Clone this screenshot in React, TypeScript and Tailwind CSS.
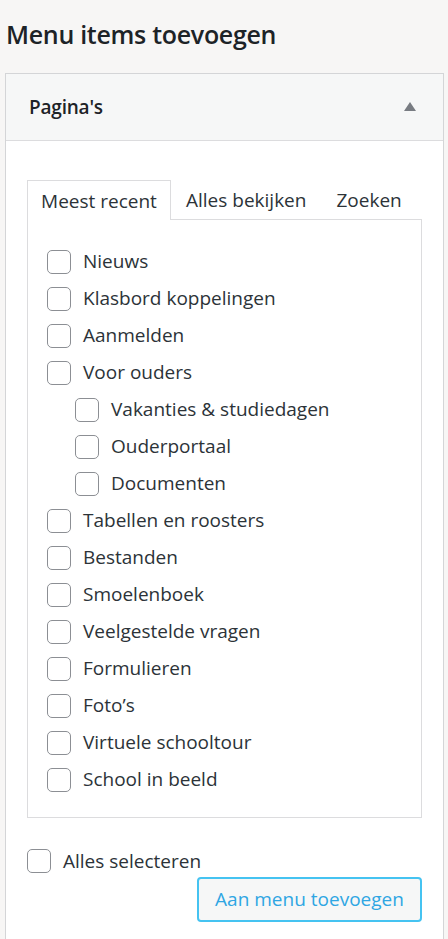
import React from "react";

type Item = { label: string; level?: number };

const items: Item[] = [
  { label: "Nieuws" },
  { label: "Klasbord koppelingen" },
  { label: "Aanmelden" },
  { label: "Voor ouders" },
  { label: "Vakanties & studiedagen", level: 1 },
  { label: "Ouderportaal", level: 1 },
  { label: "Documenten", level: 1 },
  { label: "Tabellen en roosters" },
  { label: "Bestanden" },
  { label: "Smoelenboek" },
  { label: "Veelgestelde vragen" },
  { label: "Formulieren" },
  { label: "Foto’s" },
  { label: "Virtuele schooltour" },
  { label: "School in beeld" },
];

const Box = () => (
  <span className="block w-6 h-6 shrink-0 rounded-[5px] border-[1.5px] border-[#8c8f94] bg-white" />
);

export default function App() {
  return (
    <div
      className="min-h-[939px] bg-[#f7f6f5] text-[#1d2327] overflow-hidden"
      style={{ fontFamily: '"Open Sans", "Noto Sans", sans-serif' }}
    >
      <h2 className="pl-[6px] pt-[17px] text-[25px] leading-[34px] font-semibold tracking-[-0.3px]">
        Menu items toevoegen
      </h2>

      <div className="mt-[22px] ml-[5px] mr-[4px] border border-[#d4d5d7] bg-white min-h-[900px]">
        {/* header */}
        <div className="h-[67px] flex items-center justify-between pl-[23px] pr-[27px] bg-[#f6f7f7] border-b border-[#dcdcde]">
          <span className="text-[19px] font-semibold tracking-[-0.2px]">Pagina's</span>
          <svg width="12" height="9" viewBox="0 0 12 9" className="mb-[2px]">
            <path d="M6 0 L12 9 L0 9 Z" fill="#787c82" />
          </svg>
        </div>

        <div className="pt-[38px] pl-[21px] pr-[21px]">
          {/* tabs */}
          <div className="flex items-end text-[19px] leading-[26px] text-[#2c3338]">
            <div className="h-[40px] w-[144px] flex items-center justify-center border border-b-0 border-[#dcdcde] bg-white relative top-[1px] z-10">
              Meest recent
            </div>
            <div className="h-[39px] flex items-center pl-[15px] pr-[30px]">Alles bekijken</div>
            <div className="h-[39px] flex items-center">Zoeken</div>
          </div>

          {/* list */}
          <div className="border border-[#dcdcde] pt-[23px] pb-[19px] pl-[19px] text-[19px] text-[#2c3338]">
            {items.map((it) => (
              <label
                key={it.label}
                className={`h-[37px] flex items-center gap-3 ${it.level ? "pl-[28px]" : ""}`}
              >
                <Box />
                <span>{it.label}</span>
              </label>
            ))}
          </div>

          {/* footer */}
          <div className="pt-[31px]">
            <label className="h-6 flex items-center gap-3 text-[19px] text-[#2c3338]">
              <Box />
              <span>Alles selecteren</span>
            </label>
            <div className="flex justify-end mt-[4px]">
              <button className="w-[225px] h-[45px] rounded-[4px] border-2 border-[#45c3f1] bg-[#f6f7f7] text-[#2fa6e3] text-[19px]">
                Aan menu toevoegen
              </button>
            </div>
          </div>
        </div>
      </div>
    </div>
  );
}
